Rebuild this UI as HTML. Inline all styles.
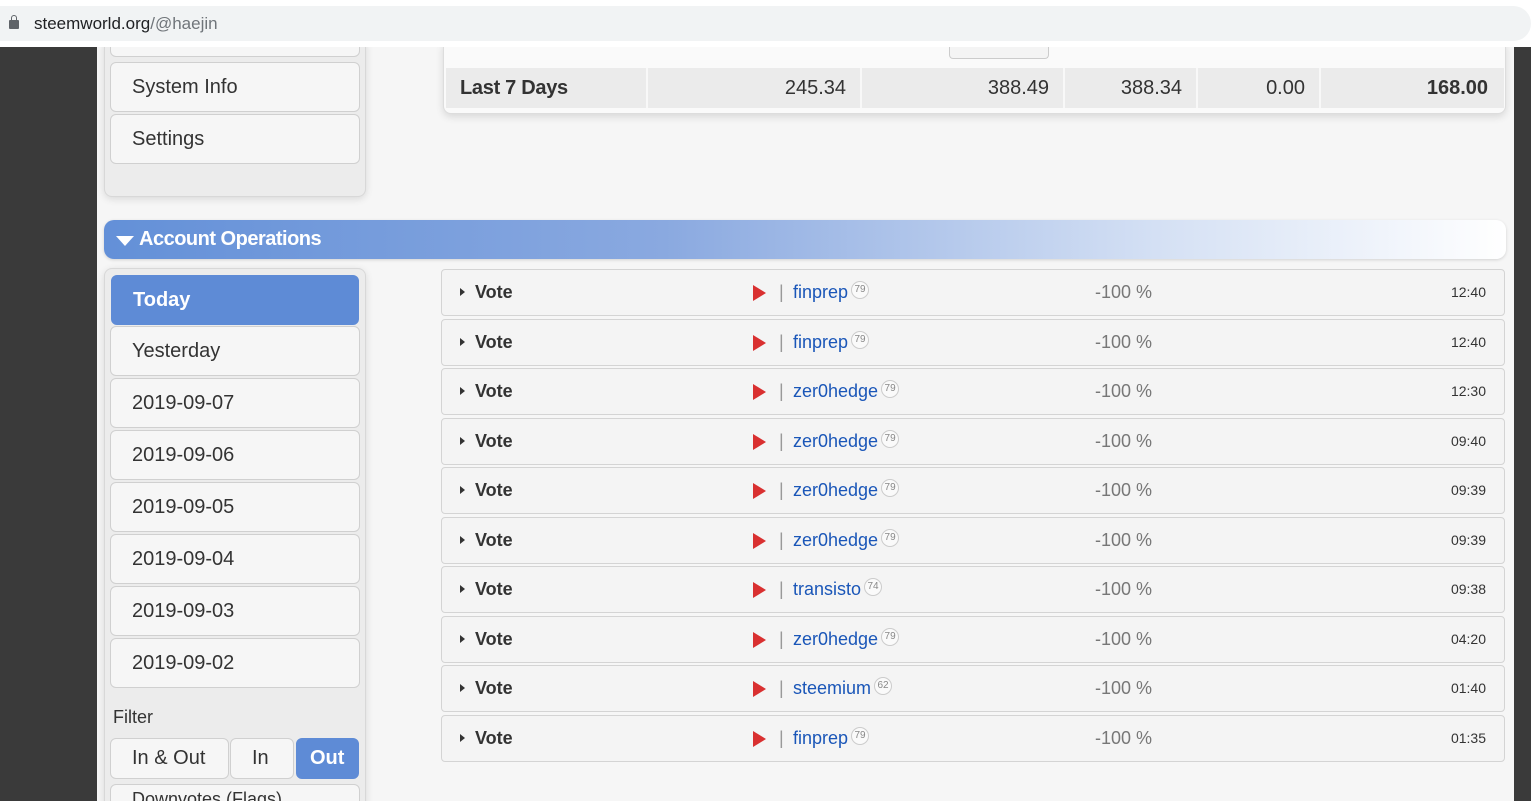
<!DOCTYPE html>
<html><head><style>
*{box-sizing:border-box}
body{margin:0;width:1531px;height:801px;overflow:hidden;background:#3a3a3a;font-family:"Liberation Sans",sans-serif;position:relative}
.top{position:absolute;left:0;top:0;width:1531px;height:47px;background:#fff;z-index:5}
.url{position:absolute;left:0;top:6px;width:1531px;height:35px;background:#f1f3f4;border-radius:0 18px 18px 0;font-size:17px;color:#202124;line-height:35px;padding-left:34px}
.url span{color:#70757a}
.lock{position:absolute;left:9px;top:14px;width:10px;height:9px;background:#5f6368;border-radius:1px}
.lock:before{content:"";position:absolute;left:2px;top:-5px;width:6px;height:6px;border:1.5px solid #5f6368;border-bottom:none;border-radius:3px 3px 0 0;box-sizing:border-box}
.page{position:absolute;left:97px;top:47px;width:1417px;height:754px;background:#f6f6f6;overflow:hidden}
.side{position:absolute;left:7px;width:262px;border:1px solid #d8d8d8;border-radius:8px;background:#ececec;box-shadow:0 2px 8px rgba(0,0,0,.12)}
.btn{position:absolute;left:13px;width:250px;height:50px;border:1px solid #d0d0d0;border-radius:6px;background:#f6f6f6;font-size:20px;color:#333;padding-left:21px;line-height:48px}
.btn.act{background:#5e8bd6;color:#fff;font-weight:bold;border-color:#5e8bd6}
.table{position:absolute;left:346px;top:-5px;width:1063px;height:72px;background:#fafafa;border:1px solid #ddd;border-radius:0 0 8px 8px;box-shadow:0 3px 8px rgba(0,0,0,.12)}
.row7{position:absolute;left:2px;top:25px;height:40px;width:1058px;background:#ebebeb;font-size:20px;color:#333;line-height:40px}
.row7 div{position:absolute;top:0;height:40px;text-align:right;border-left:2px solid #f8f8f8;padding-right:14px}
.hdr{position:absolute;left:7px;top:173px;width:1402px;height:39px;border-radius:10px;background:linear-gradient(90deg,#6390d8 0%,#8aa9e0 40%,#d4e0f4 75%,#fff 100%);color:#fff;font-weight:bold;font-size:20px;line-height:39px;padding-left:35px;letter-spacing:-.5px;box-shadow:0 1px 3px rgba(0,0,0,.15)}
.hdr:before{content:"";position:absolute;left:12px;top:16px;border-left:9px solid transparent;border-right:9px solid transparent;border-top:10px solid #fff}
.op{position:absolute;left:344px;width:1064px;height:47px;border:1px solid #d4d4d4;border-radius:4px;background:#f4f4f4;font-size:18px;line-height:45px;color:#333}
.op .tri{position:absolute;left:18px;top:18px;border-top:4px solid transparent;border-bottom:4px solid transparent;border-left:5px solid #333}
.op .t{position:absolute;left:33px;font-weight:bold}
.op .pl{position:absolute;left:311px;top:15px;border-top:8px solid transparent;border-bottom:8px solid transparent;border-left:13px solid #d93030}
.op .bar{position:absolute;left:337px;color:#999}
.op .n{position:absolute;left:351px;color:#1a56b8}
.op .n i{font-style:normal;display:inline-block;width:18px;height:18px;border:1px solid #ccc;border-radius:50%;font-size:10px;line-height:16px;text-align:center;color:#888;vertical-align:6px;margin-left:3px;background:#fafafa}
.op .p{position:absolute;left:653px;color:#777}
.op .tm{position:absolute;right:18px;font-size:14px;color:#333}
</style></head><body>
<div class="top"><div class="url"><div class="lock"></div>steemworld.org<span>/@haejin</span></div></div>
<div class="page">
<div class="side" style="top:-10px;height:160px"></div>
<div class="btn" style="top:-40px"></div>
<div class="btn" style="top:15px">System Info</div>
<div class="btn" style="top:67px">Settings</div>
<div class="table">
<div style="position:absolute;left:505px;top:0;width:100px;height:16px;border:1px solid #ccc;border-top:none;border-radius:0 0 4px 4px;background:#f4f4f4"></div>
<div class="row7">
<div style="left:0;width:200px;border:none;text-align:left;padding-left:14px;font-weight:bold;letter-spacing:-.3px">Last 7 Days</div>
<div style="left:200px;width:214px">245.34</div>
<div style="left:414px;width:203px">388.49</div>
<div style="left:617px;width:133px">388.34</div>
<div style="left:750px;width:123px">0.00</div>
<div style="left:873px;width:185px;font-weight:bold;padding-right:16px">168.00</div>
</div></div>
<div class="hdr">Account Operations</div>
<div class="side" style="top:221px;height:560px"></div>
<div class="btn act" style="top:228px;left:14px;width:248px">Today</div>
<div class="btn" style="top:279px">Yesterday</div>
<div class="btn" style="top:331px">2019-09-07</div>
<div class="btn" style="top:383px">2019-09-06</div>
<div class="btn" style="top:435px">2019-09-05</div>
<div class="btn" style="top:487px">2019-09-04</div>
<div class="btn" style="top:539px">2019-09-03</div>
<div class="btn" style="top:591px">2019-09-02</div>
<div style="position:absolute;left:16px;top:660px;font-size:18px;color:#333">Filter</div>
<div class="btn" style="top:691px;width:119px;height:41px;line-height:39px">In &amp; Out</div>
<div class="btn" style="top:691px;left:133px;width:64px;height:41px;line-height:39px;padding-left:21px">In</div>
<div class="btn act" style="top:691px;left:199px;width:63px;height:41px;line-height:39px;padding-left:13px">Out</div>
<div class="btn" style="top:737px;height:40px;line-height:28px;font-size:18px">Downvotes (Flags)</div>
<div class="op" style="top:222px"><b class="tri"></b><span class="t">Vote</span><b class="pl"></b><span class="bar">|</span><span class="n">finprep<i>79</i></span><span class="p">-100 %</span><span class="tm">12:40</span></div>
<div class="op" style="top:272px"><b class="tri"></b><span class="t">Vote</span><b class="pl"></b><span class="bar">|</span><span class="n">finprep<i>79</i></span><span class="p">-100 %</span><span class="tm">12:40</span></div>
<div class="op" style="top:321px"><b class="tri"></b><span class="t">Vote</span><b class="pl"></b><span class="bar">|</span><span class="n">zer0hedge<i>79</i></span><span class="p">-100 %</span><span class="tm">12:30</span></div>
<div class="op" style="top:371px"><b class="tri"></b><span class="t">Vote</span><b class="pl"></b><span class="bar">|</span><span class="n">zer0hedge<i>79</i></span><span class="p">-100 %</span><span class="tm">09:40</span></div>
<div class="op" style="top:420px"><b class="tri"></b><span class="t">Vote</span><b class="pl"></b><span class="bar">|</span><span class="n">zer0hedge<i>79</i></span><span class="p">-100 %</span><span class="tm">09:39</span></div>
<div class="op" style="top:470px"><b class="tri"></b><span class="t">Vote</span><b class="pl"></b><span class="bar">|</span><span class="n">zer0hedge<i>79</i></span><span class="p">-100 %</span><span class="tm">09:39</span></div>
<div class="op" style="top:519px"><b class="tri"></b><span class="t">Vote</span><b class="pl"></b><span class="bar">|</span><span class="n">transisto<i>74</i></span><span class="p">-100 %</span><span class="tm">09:38</span></div>
<div class="op" style="top:569px"><b class="tri"></b><span class="t">Vote</span><b class="pl"></b><span class="bar">|</span><span class="n">zer0hedge<i>79</i></span><span class="p">-100 %</span><span class="tm">04:20</span></div>
<div class="op" style="top:618px"><b class="tri"></b><span class="t">Vote</span><b class="pl"></b><span class="bar">|</span><span class="n">steemium<i>62</i></span><span class="p">-100 %</span><span class="tm">01:40</span></div>
<div class="op" style="top:668px"><b class="tri"></b><span class="t">Vote</span><b class="pl"></b><span class="bar">|</span><span class="n">finprep<i>79</i></span><span class="p">-100 %</span><span class="tm">01:35</span></div>
</div>
</body></html>
